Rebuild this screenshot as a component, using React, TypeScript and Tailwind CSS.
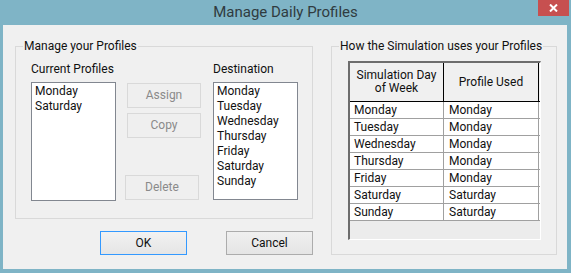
import React from "react";

const font = { fontFamily: "Roboto, 'Open Sans', sans-serif" };

const currentProfiles = ["Monday", "Saturday"];
const days = ["Monday", "Tuesday", "Wednesday", "Thursday", "Friday", "Saturday", "Sunday"];
const usage = [
  ["Monday", "Monday"],
  ["Tuesday", "Monday"],
  ["Wednesday", "Monday"],
  ["Thursday", "Monday"],
  ["Friday", "Monday"],
  ["Saturday", "Saturday"],
  ["Sunday", "Saturday"],
];

const DisabledButton = ({ label, className = "" }: { label: string; className?: string }) => (
  <button
    disabled
    className={`w-[74px] h-[25px] border border-[#d9d9d9] bg-[#efefef] text-[#8a8a8a] text-[12px] leading-[15px] ${className}`}
  >
    {label}
  </button>
);

const ListBox = ({ items, h }: { items: string[]; h: string }) => (
  <div className={`w-[85px] ${h} mt-[5px] border border-[#828790] bg-white pt-[1px] pl-[3px]`}>
    {items.map((item) => (
      <div key={item} className="text-[12px] leading-[15px] text-[#111]">
        {item}
      </div>
    ))}
  </div>
);

export default function App() {
  return (
    <div className="w-[571px] h-[273px] bg-[#7fb4c6] flex flex-col" style={font}>
      {/* Title bar */}
      <div className="relative h-[25px] flex items-center justify-center">
        <span className="text-[15px] leading-[25px] text-[#2f3b40]">Manage Daily Profiles</span>
        <button className="absolute top-0 right-[2px] w-[31px] h-[16px] bg-[#c75050] flex items-center justify-center">
          <svg width="9" height="8" viewBox="0 0 9 8">
            <path d="M1 0.5 L8 7.5 M8 0.5 L1 7.5" stroke="white" strokeWidth="2" />
          </svg>
        </button>
      </div>

      {/* Client area */}
      <div className="ml-[3px] w-[564px] h-[244px] bg-[#f0f0f0] flex pl-[12px] pt-[21px]">
        <div className="flex flex-col w-[298px]">
          {/* Manage your Profiles group */}
          <div className="relative w-[298px] h-[173px] border border-[#d9d9d9] flex pl-[15px] pt-[15px]">
            <span className="absolute -top-[8px] left-[7px] px-[1px] bg-[#f0f0f0] text-[12px] leading-[15px] text-[#111]">
              Manage your Profiles
            </span>
            <div className="flex flex-col">
              <span className="text-[12px] leading-[15px] text-[#111]">Current Profiles</span>
              <ListBox items={currentProfiles} h="h-[119px]" />
            </div>
            <div className="flex flex-col ml-[11px] mt-[21px]">
              <DisabledButton label="Assign" />
              <DisabledButton label="Copy" className="mt-[5px]" />
              <DisabledButton label="Delete" className="mt-[37px] -ml-[2px]" />
            </div>
            <div className="flex flex-col ml-[12px]">
              <span className="text-[12px] leading-[15px] text-[#111]">Destination</span>
              <ListBox items={days} h="h-[118px]" />
            </div>
          </div>

          {/* Dialog buttons */}
          <div className="flex mt-[12px] ml-[85px] gap-[39px]">
            <button className="w-[87px] h-[24px] border border-[#3399ff] bg-gradient-to-b from-[#f2f2f2] to-[#e5e5e5] text-[12px] text-[#111]">
              OK
            </button>
            <button className="w-[87px] h-[24px] border border-[#acacac] bg-gradient-to-b from-[#f0f0f0] to-[#e5e5e5] text-[12px] text-[#111]">
              Cancel
            </button>
          </div>
        </div>

        {/* How the Simulation uses your Profiles group */}
        <div className="relative ml-[18px] w-[226px] h-[209px] border border-[#d9d9d9] pl-[16px] pt-[14px]">
          <span className="absolute -top-[8px] left-[7px] px-[1px] bg-[#f0f0f0] text-[12px] leading-[15px] text-[#111]">
            How the Simulation uses your Profiles
          </span>
          <div className="w-[193px] h-[179px] border-l-2 border-t-2 border-[#6d6d6d] border-r border-b border-r-white border-b-white bg-[#ececec]">
            <div className="flex h-[39px] bg-[#f0f0f0] border-b border-black">
              <div className="w-[94px] border-r border-black flex items-center justify-center text-center text-[12px] leading-[13px] text-[#111]">
                Simulation Day
                <br />
                of Week
              </div>
              <div className="w-[95px] border-r border-black flex items-center justify-center text-[12px] leading-[13px] text-[#111]">
                Profile Used
              </div>
            </div>
            {usage.map(([day, profile]) => (
              <div key={day} className="flex h-[17px] bg-white border-b border-[#a0a0a0]">
                <div className="w-[94px] border-r border-[#a0a0a0] pl-[4px] text-[12px] leading-[16px] text-[#111]">
                  {day}
                </div>
                <div className="w-[95px] border-r border-[#a0a0a0] pl-[5px] text-[12px] leading-[16px] text-[#111]">
                  {profile}
                </div>
              </div>
            ))}
          </div>
        </div>
      </div>
    </div>
  );
}
